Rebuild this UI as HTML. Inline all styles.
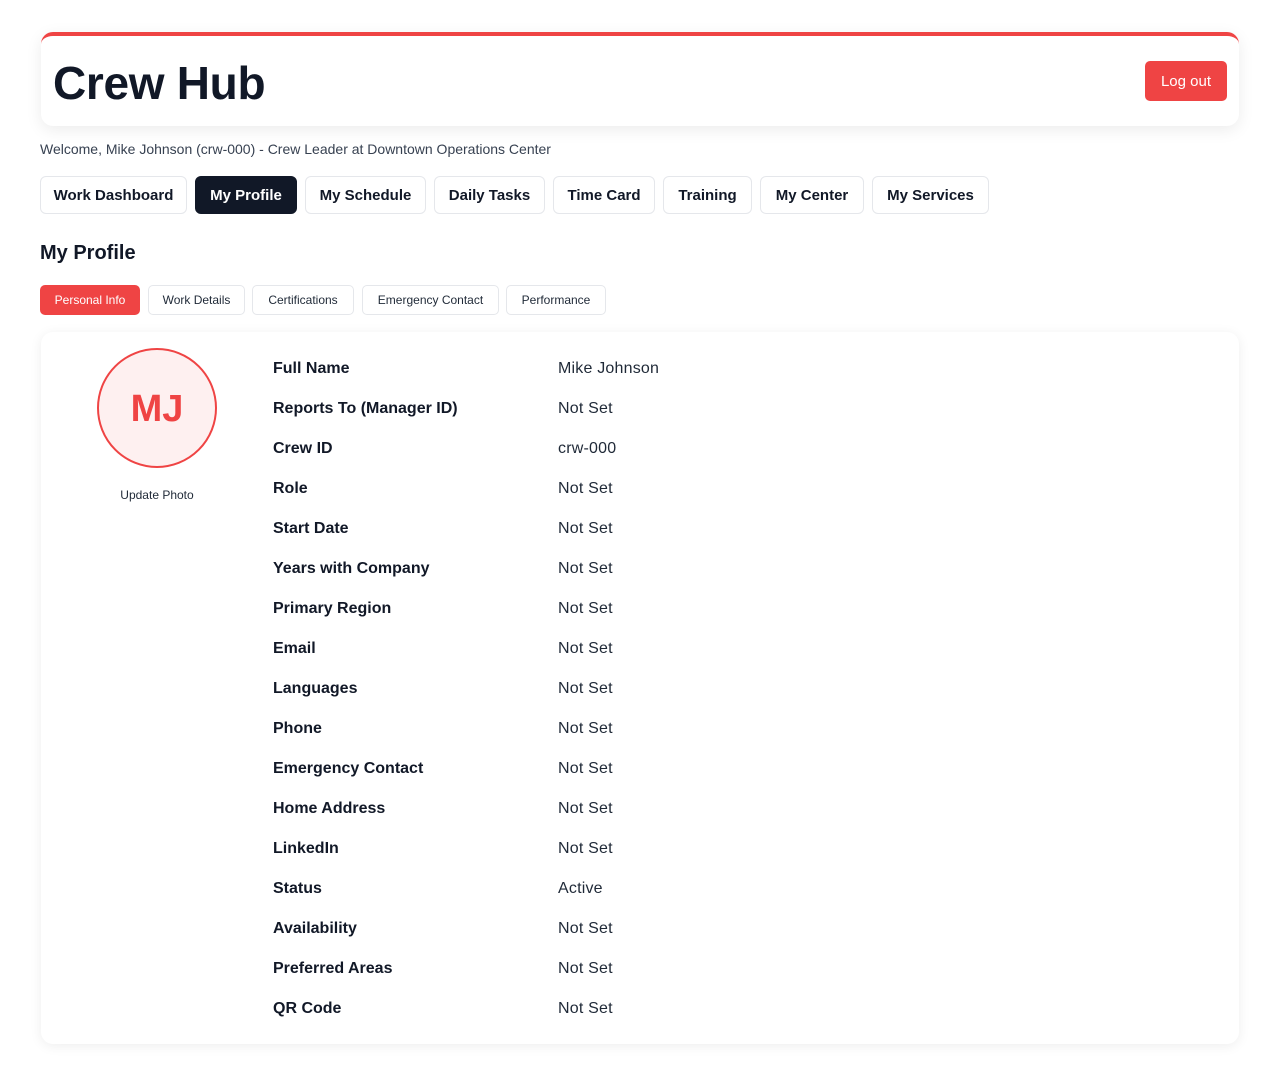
<!DOCTYPE html>
<html><head><meta charset="utf-8"><style>
*{box-sizing:border-box;margin:0;padding:0}
body{width:1265px;height:1085px;background:#fff;font-family:"Liberation Sans",Arial,sans-serif;color:#111827;position:relative;overflow:hidden}
.a{position:absolute}
.hdr{left:41px;top:32px;width:1198px;height:94px;border-top:4px solid #ef4444;border-radius:12px;background:#fff;box-shadow:0 4px 16px rgba(0,0,0,.08)}
.hdr h1{position:absolute;left:12px;top:20px;font-size:46px;font-weight:700;letter-spacing:-0.3px;color:#111827}
.logout{position:absolute;right:12px;top:25px;width:82px;height:40px;background:#ef4444;color:#fff;border-radius:5px;font-size:15px;line-height:41px;text-align:center}
.wel{left:40px;top:141px;font-size:14px;color:#374151}
.nav{height:38px;top:176px;border:1px solid #e5e7eb;border-radius:6px;font-size:15px;font-weight:700;line-height:37px;text-align:center;color:#111827}
.nav.on{background:#111827;color:#fff;border-color:#111827}
.h2{left:40px;top:242px;font-size:20px;font-weight:700}
.st{top:285px;height:30px;border:1px solid #e5e7eb;border-radius:5px;font-size:12px;line-height:29px;text-align:center;color:#1f2937}
.st.on{background:#ef4444;color:#fff;border-color:#ef4444}
.card{left:41px;top:332px;width:1198px;height:712px;border-radius:12px;background:#fff;box-shadow:0 2px 12px rgba(0,0,0,.07)}
.av{left:97px;top:348px;width:120px;height:120px;border-radius:50%;border:2px solid #ef4444;background:#fef0f0;color:#ef4444;font-size:38px;font-weight:700;text-align:center;line-height:118px}
.up{left:97px;top:488px;width:120px;text-align:center;font-size:12px;color:#1f2937}
.l{left:273px;font-size:16px;font-weight:700;color:#111827;margin-top:2px}
.v{left:558px;font-size:16px;color:#1f2937;margin-top:2px;letter-spacing:0.2px}
</style></head><body>
<div class="a hdr"><h1>Crew Hub</h1><div class="logout">Log out</div></div>
<div class="a wel">Welcome, Mike Johnson (crw-000) - Crew Leader at Downtown Operations Center</div>
<div class="a nav" style="left:40px;width:147px">Work Dashboard</div>
<div class="a nav on" style="left:195px;width:102px">My Profile</div>
<div class="a nav" style="left:305px;width:121px">My Schedule</div>
<div class="a nav" style="left:434px;width:111px">Daily Tasks</div>
<div class="a nav" style="left:553px;width:102px">Time Card</div>
<div class="a nav" style="left:663px;width:89px">Training</div>
<div class="a nav" style="left:760px;width:104px">My Center</div>
<div class="a nav" style="left:872px;width:117px">My Services</div>
<div class="a h2">My Profile</div>
<div class="a st on" style="left:40px;width:100px">Personal Info</div>
<div class="a st" style="left:148px;width:97px">Work Details</div>
<div class="a st" style="left:252px;width:102px">Certifications</div>
<div class="a st" style="left:362px;width:137px">Emergency Contact</div>
<div class="a st" style="left:506px;width:100px">Performance</div>
<div class="a card"></div>
<div class="a av">MJ</div>
<div class="a up">Update Photo</div>
<div class="a l" style="top:358px">Full Name</div><div class="a v" style="top:358px">Mike Johnson</div>
<div class="a l" style="top:398px">Reports To (Manager ID)</div><div class="a v" style="top:398px">Not Set</div>
<div class="a l" style="top:438px">Crew ID</div><div class="a v" style="top:438px">crw-000</div>
<div class="a l" style="top:478px">Role</div><div class="a v" style="top:478px">Not Set</div>
<div class="a l" style="top:518px">Start Date</div><div class="a v" style="top:518px">Not Set</div>
<div class="a l" style="top:558px">Years with Company</div><div class="a v" style="top:558px">Not Set</div>
<div class="a l" style="top:598px">Primary Region</div><div class="a v" style="top:598px">Not Set</div>
<div class="a l" style="top:638px">Email</div><div class="a v" style="top:638px">Not Set</div>
<div class="a l" style="top:678px">Languages</div><div class="a v" style="top:678px">Not Set</div>
<div class="a l" style="top:718px">Phone</div><div class="a v" style="top:718px">Not Set</div>
<div class="a l" style="top:758px">Emergency Contact</div><div class="a v" style="top:758px">Not Set</div>
<div class="a l" style="top:798px">Home Address</div><div class="a v" style="top:798px">Not Set</div>
<div class="a l" style="top:838px">LinkedIn</div><div class="a v" style="top:838px">Not Set</div>
<div class="a l" style="top:878px">Status</div><div class="a v" style="top:878px">Active</div>
<div class="a l" style="top:918px">Availability</div><div class="a v" style="top:918px">Not Set</div>
<div class="a l" style="top:958px">Preferred Areas</div><div class="a v" style="top:958px">Not Set</div>
<div class="a l" style="top:998px">QR Code</div><div class="a v" style="top:998px">Not Set</div>
</body></html>
